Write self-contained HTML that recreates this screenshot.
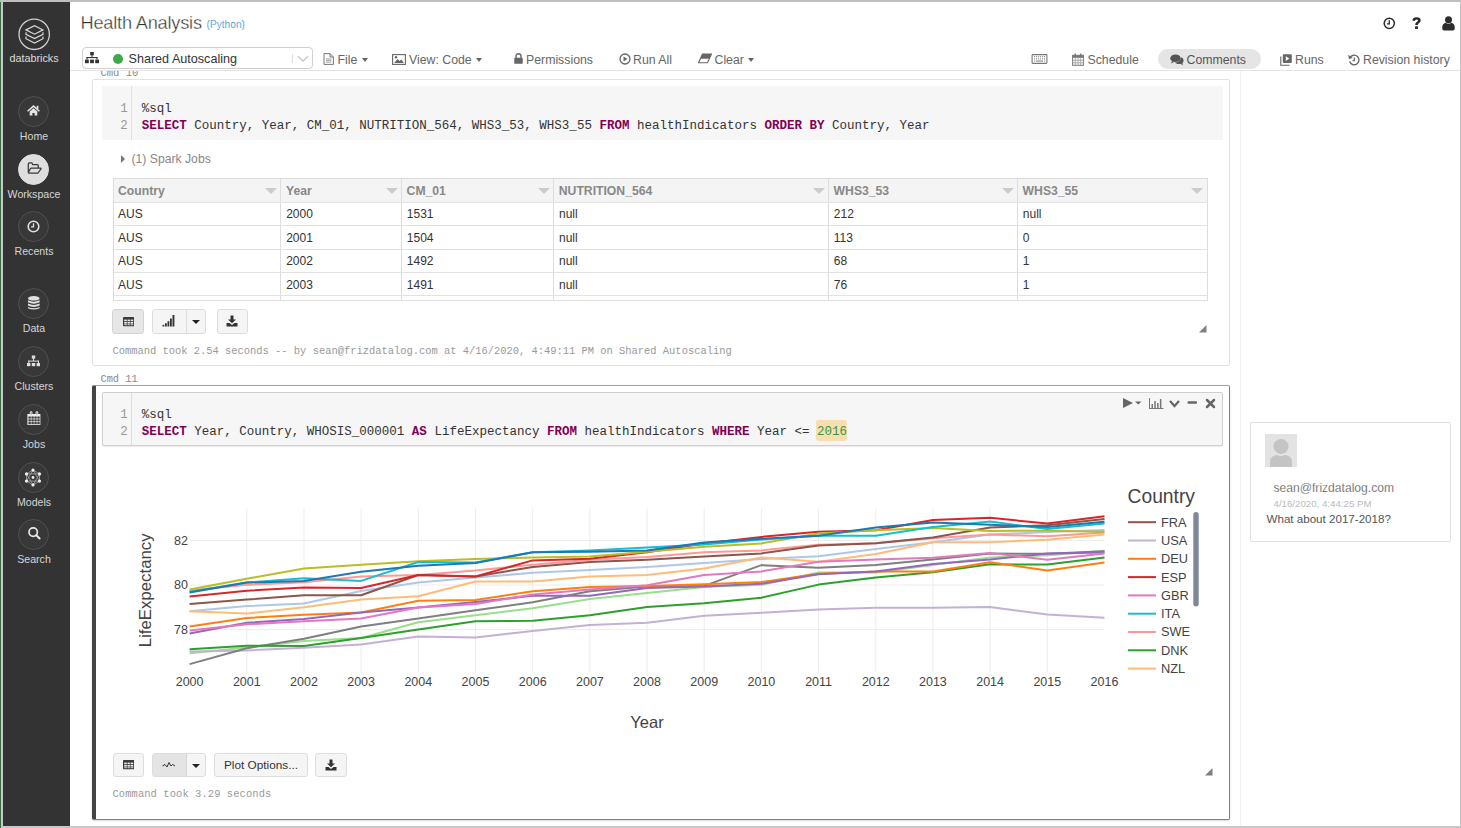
<!DOCTYPE html>
<html><head><meta charset="utf-8">
<style>
*{box-sizing:border-box;margin:0;padding:0}
html,body{width:1461px;height:828px;overflow:hidden;background:#fff}
body{position:relative;font-family:"Liberation Sans",sans-serif;color:#333}
.a{position:absolute}
.mono{font-family:"Liberation Mono",monospace}
.t{position:absolute;white-space:nowrap;line-height:1}
/* sidebar */
#side{left:3px;top:2px;width:67px;height:824px;background:#333}
.nav{position:absolute;left:15.4px;width:31px;height:31px;border-radius:50%;border:1px solid #505050;background:#383838}
.nav svg{position:absolute;left:-1px;top:-1px}
.navl{position:absolute;left:0;width:62px;text-align:center;font-size:10.6px;color:#d6d6d6;line-height:1;white-space:nowrap}
/* toolbar */
.tb{position:absolute;top:53.5px;font-size:12.3px;color:#666;line-height:1;white-space:nowrap}
.tb svg{position:absolute}
.caret{display:inline-block;width:0;height:0;border-left:3.5px solid transparent;border-right:3.5px solid transparent;border-top:4px solid #666}
/* code */
.code{position:absolute;font-family:"Liberation Mono",monospace;font-size:12.5px;line-height:17px;color:#333;white-space:pre}
.kw{color:#7f0055;font-weight:bold}
.ln{position:absolute;font-family:"Liberation Mono",monospace;font-size:12.5px;line-height:17px;color:#999;text-align:right;width:14px}
.editor{position:absolute;background:#f6f6f6}
/* table */
.tbl{position:absolute;left:112.5px;top:178px;width:1095px;height:123px;border:1px solid #ddd;overflow:hidden}
.hdr{position:absolute;left:0;top:0;height:24px;width:100%;background:#f4f4f4;border-bottom:1px solid #ddd}
.col{position:absolute;top:0;height:123px;border-left:1px solid #ddd}
.ht{position:absolute;top:6px;font-size:12.2px;font-weight:bold;color:#888;line-height:1;white-space:nowrap}
.sc{position:absolute;top:9px;width:0;height:0;border-left:6px solid transparent;border-right:6px solid transparent;border-top:6.5px solid #ccc}
.row{position:absolute;left:0;width:100%;border-bottom:1px solid #e2e2e2}
.ct{position:absolute;font-size:12px;color:#333;line-height:1;white-space:nowrap}
.btn{position:absolute;border:1px solid #ddd;border-radius:3px;background:#f5f5f5}
.btn.on{background:#e6e6e6;border-color:#d4d4d4}
.cmdt{position:absolute;font-family:"Liberation Mono",monospace;font-size:10.43px;color:#999;line-height:1;white-space:nowrap}
.chart text{font-family:"Liberation Sans",sans-serif;fill:#444}
</style></head><body>
<!-- frame -->
<div class="a" style="left:0;top:0;width:1px;height:828px;background:#3d6b45"></div>
<div class="a" style="left:1px;top:0;width:2px;height:828px;background:#c8c8cc"></div>
<div class="a" style="left:0;top:0;width:1461px;height:2px;background:#bfbfbf"></div>
<div class="a" style="left:1459.5px;top:0;width:1.5px;height:828px;background:#c2c2c2"></div>
<div class="a" style="left:1px;top:826px;width:1460px;height:2px;background:#c8c8c8"></div>

<!-- sidebar -->
<div id="side" class="a">
  <svg class="a" style="left:0;top:0" width="67" height="70" viewBox="0 -0.7 67 70">
    <circle cx="31.2" cy="31.6" r="15.2" fill="none" stroke="#cfcfcf" stroke-width="1.3"/>
    <g fill="none" stroke="#d8d8d8" stroke-width="1.2" stroke-linejoin="miter">
      <path d="M23 27.2 L31.5 22.9 L40 27.2 L31.5 31.5 Z"/>
      <path d="M23 29.5 V31.6 L31.5 35.9 L40 31.6 V29.5"/>
      <path d="M23 33.9 V36 L31.5 40.3 L40 36 V33.9"/>
    </g>
  </svg>
  <div class="navl" style="top:51px;font-size:10.8px;color:#dcdcdc">databricks</div>

  <div class="nav" style="top:93.8px"><svg width="31" height="31" viewBox="0 0 31 31"><path d="M9.6 15.3 L15.5 10.1 L21.4 15.3" fill="none" stroke="#e6e6e6" stroke-width="1.5"/><rect x="18.7" y="9.8" width="1.7" height="3" fill="#e6e6e6"/><path d="M11.7 15.6 L15.5 12.3 L19.3 15.6 V19.6 H16.6 V17.1 H14.4 V19.6 H11.7 Z" fill="#e6e6e6"/></svg></div>
  <div class="navl" style="top:128.5px">Home</div>

  <div class="nav" style="top:151.5px;background:#dedede;border-color:#dedede"><svg width="31" height="31" viewBox="0 0 31 31"><path d="M10.3 18.6 V9.9 Q10.3 8.9 11.3 8.9 H13.3 Q14.1 8.9 14.4 9.7 L14.7 10.6 H19.2 Q20.3 10.6 20.3 11.7 V13.8 M10.3 18.6 Q10.4 19 11 19 H19.6 Q20.2 19 20.4 18.5 L23 14.8 Q23.2 14 22.4 14 H13.3 Q12.8 14 12.5 14.5 L10.3 18.6" fill="none" stroke="#3a3a3a" stroke-width="1.25" stroke-linejoin="round"/></svg></div>
  <div class="navl" style="top:186.5px">Workspace</div>

  <div class="nav" style="top:208.8px"><svg width="31" height="31" viewBox="0 0 31 31"><circle cx="15.5" cy="15.5" r="5.3" fill="none" stroke="#e0e0e0" stroke-width="1.6"/><path d="M15.5 12.2 V15.8 H13" fill="none" stroke="#e0e0e0" stroke-width="1.3"/></svg></div>
  <div class="navl" style="top:244px">Recents</div>

  <div class="nav" style="top:286.2px"><svg width="31" height="31" viewBox="0 0 31 31"><g fill="#e0e0e0" transform="translate(15.8 0) scale(1.08 1) translate(-15.5 0)"><ellipse cx="15.5" cy="10.3" rx="5.4" ry="2.3"/><path d="M10.1 12.3 Q15.5 15.2 20.9 12.3 V14.3 Q15.5 17.2 10.1 14.3 Z"/><path d="M10.1 15.6 Q15.5 18.5 20.9 15.6 V17.6 Q15.5 20.5 10.1 17.6 Z"/><path d="M10.1 18.9 Q15.5 21.8 20.9 18.9 V20.2 Q15.5 22.8 10.1 20.2 Z"/></g></svg></div>
  <div class="navl" style="top:321px">Data</div>

  <div class="nav" style="top:344.1px"><svg width="31" height="31" viewBox="0 0 31 31"><g fill="#e0e0e0"><rect x="13.8" y="9.5" width="3.4" height="3.2"/><rect x="15" y="12.5" width="1" height="2.5"/><rect x="10.3" y="14.6" width="10.4" height="1"/><rect x="10.3" y="14.6" width="1" height="2.5"/><rect x="20" y="14.6" width="1" height="2.5"/><rect x="9" y="17" width="3.4" height="3.2"/><rect x="13.8" y="17" width="3.4" height="3.2"/><rect x="18.6" y="17" width="3.4" height="3.2"/></g></svg></div>
  <div class="navl" style="top:379px">Clusters</div>

  <div class="nav" style="top:401.9px"><svg width="31" height="31" viewBox="0 0 31 31"><rect x="9.4" y="10" width="13" height="11.1" rx="0.4" fill="#ececec"/><g fill="#363636"><rect x="10.5" y="12.5" width="2.3" height="2.1"/><rect x="10.5" y="15.3" width="2.3" height="2.1"/><rect x="10.5" y="18.1" width="2.3" height="2.1"/><rect x="13.45" y="12.5" width="2.3" height="2.1"/><rect x="13.45" y="15.3" width="2.3" height="2.1"/><rect x="13.45" y="18.1" width="2.3" height="2.1"/><rect x="16.4" y="12.5" width="2.3" height="2.1"/><rect x="16.4" y="15.3" width="2.3" height="2.1"/><rect x="16.4" y="18.1" width="2.3" height="2.1"/><rect x="19.35" y="12.5" width="2.3" height="2.1"/><rect x="19.35" y="15.3" width="2.3" height="2.1"/><rect x="19.35" y="18.1" width="2.3" height="2.1"/></g><rect x="11.8" y="7.2" width="2.6" height="3.8" rx="1.2" fill="#ececec"/><rect x="12.7" y="8.2" width="0.8" height="2.2" fill="#555"/><rect x="17.6" y="7.2" width="2.6" height="3.8" rx="1.2" fill="#ececec"/><rect x="18.5" y="8.2" width="0.8" height="2.2" fill="#555"/></svg></div>
  <div class="navl" style="top:436.5px">Jobs</div>

  <div class="nav" style="top:459.7px"><svg width="31" height="31" viewBox="0 0 31 31" style="left:-1px;top:-1px"><g stroke="#cfcfcf" stroke-width="0.7" fill="none" opacity="0.85"><path d="M15 8.1 L21.5 11.9 V19.1 L15 22.9 L8.5 19.1 V11.9 Z"/><path d="M15 8.1 L21.5 19.1 H8.5 Z M15 22.9 L8.5 11.9 H21.5 Z"/></g><g fill="#f0f0f0"><circle cx="15" cy="8.1" r="1.6"/><circle cx="21.5" cy="11.9" r="1.6"/><circle cx="21.5" cy="19.1" r="1.6"/><circle cx="15" cy="22.9" r="1.6"/><circle cx="8.5" cy="19.1" r="1.6"/><circle cx="8.5" cy="11.9" r="1.6"/><circle cx="15" cy="15.5" r="1.4"/></g></svg></div>
  <div class="navl" style="top:494.5px">Models</div>

  <div class="nav" style="top:517.3px"><svg width="31" height="31" viewBox="0 0 31 31"><circle cx="15.2" cy="13.1" r="4.2" fill="none" stroke="#e8e8e8" stroke-width="1.7"/><path d="M18.3 16.2 L21.6 19.5" stroke="#e8e8e8" stroke-width="2" stroke-linecap="round"/></svg></div>
  <div class="navl" style="top:552px">Search</div>
</div>

<!-- header -->
<div class="t" style="left:80.5px;top:14px;font-size:18.2px;color:#333;letter-spacing:-0.2px;-webkit-text-stroke:0.35px #fff">Health Analysis</div>
<div class="t" style="left:206.5px;top:19.5px;font-size:10.2px;color:#2b8ad0;-webkit-text-stroke:0.2px #fff">(Python)</div>

<svg class="a" style="left:1383px;top:17px" width="13" height="13" viewBox="0 0 13 13"><circle cx="6.3" cy="6.3" r="5.1" fill="none" stroke="#2a2a2a" stroke-width="1.5"/><path d="M6.3 3.2 V6.8 H4" fill="none" stroke="#2a2a2a" stroke-width="1.3"/></svg>
<svg class="a" style="left:1412px;top:16.8px" width="9" height="12.5" viewBox="0 0 9 12.5"><path d="M0.3 3.6 Q0.6 0.2 4.6 0.2 Q8.7 0.2 8.7 3.4 Q8.7 5.2 6.9 6.2 Q5.8 6.8 5.8 7.9 H3.2 Q3.1 5.9 4.6 5 Q6 4.2 6 3.5 Q6 2.4 4.5 2.4 Q3.1 2.4 2.8 4.1 Z" fill="#2a2a2a"/><rect x="3.1" y="9.3" width="2.8" height="2.9" rx="0.3" fill="#2a2a2a"/></svg>
<svg class="a" style="left:1441px;top:15.6px" width="15" height="15" viewBox="0 0 15 15"><circle cx="7.5" cy="3.8" r="3.5" fill="#2d2d2d"/><path d="M1.2 12 Q1.2 7.7 4.5 6.8 Q7.5 8.6 10.5 6.8 Q13.8 7.7 13.8 12 Q13.8 14.6 12 14.6 H3 Q1.2 14.6 1.2 12 Z" fill="#2d2d2d"/></svg>

<!-- toolbar -->
<div class="a" style="left:70px;top:70px;width:1390px;height:1px;background:#e4e4e4"></div>
<div class="a" style="left:81.5px;top:46.5px;width:231.5px;height:22px;border:1px solid #d0d0d0;border-radius:4px;background:#fff"></div>
<svg class="a" style="left:85px;top:52px" width="14" height="12" viewBox="0 0 14 12"><g fill="#333"><rect x="5.2" y="0" width="3.6" height="3.3"/><rect x="6.5" y="3" width="1" height="2.5"/><rect x="1.5" y="5" width="11" height="1.1"/><rect x="1.5" y="5" width="1.1" height="2.5"/><rect x="11.4" y="5" width="1.1" height="2.5"/><rect x="0" y="7.6" width="3.8" height="3.6"/><rect x="5.1" y="7.6" width="3.8" height="3.6"/><rect x="10.2" y="7.6" width="3.8" height="3.6"/></g></svg>
<div class="a" style="left:113px;top:54.3px;width:10px;height:10px;border-radius:50%;background:#3eaa4a"></div>
<div class="t" style="left:128.5px;top:53px;font-size:12.6px;color:#333">Shared Autoscaling</div>
<div class="a" style="left:292px;top:54px;width:1px;height:9px;background:#ddd"></div>
<svg class="a" style="left:297px;top:55px" width="12" height="8" viewBox="0 0 12 8"><path d="M1 1.2 L6 6 L11 1.2" fill="none" stroke="#c8c8c8" stroke-width="1.4"/></svg>

<svg class="a" style="left:322.5px;top:52.5px" width="12" height="12" viewBox="0 0 12 12"><path d="M1 0.6 H7 L10.4 4 V11.4 H1 Z M7 0.6 V4 H10.4" fill="none" stroke="#777" stroke-width="1"/><path d="M3 6 H8.4 M3 7.6 H8.4 M3 9.2 H8.4" stroke="#999" stroke-width="0.9"/></svg>
<div class="tb" style="left:337.5px">File <span class="caret" style="margin-left:1px;vertical-align:2px"></span></div>

<svg class="a" style="left:392px;top:53.5px" width="14" height="11" viewBox="0 0 14 11"><rect x="0.6" y="0.6" width="12.8" height="9.8" fill="none" stroke="#666" stroke-width="1.1"/><path d="M2.2 9 L5.5 5 L7.5 7 L9.5 5.5 L11.8 9 Z" fill="#666"/><circle cx="4" cy="3.3" r="1.2" fill="#666"/></svg>
<div class="tb" style="left:409px">View: Code <span class="caret" style="margin-left:1px;vertical-align:2px"></span></div>

<svg class="a" style="left:513.5px;top:52.5px" width="9" height="11" viewBox="0 0 9 11"><path d="M2 5 V3.3 Q2 0.8 4.5 0.8 Q7 0.8 7 3.3 V5" fill="none" stroke="#666" stroke-width="1.4"/><rect x="0.3" y="4.8" width="8.4" height="6" rx="0.6" fill="#666"/></svg>
<div class="tb" style="left:526px">Permissions</div>

<svg class="a" style="left:618.5px;top:52.5px" width="12" height="12" viewBox="0 0 12 12"><circle cx="6" cy="6" r="5" fill="none" stroke="#666" stroke-width="1.3"/><path d="M4.5 3.5 L8.5 6 L4.5 8.5 Z" fill="#666"/></svg>
<div class="tb" style="left:633px">Run All</div>

<svg class="a" style="left:698px;top:53px" width="14" height="11" viewBox="0 0 14 11"><path d="M4.5 1 H13.5 L9.5 9.8 H0.5 Z" fill="none" stroke="#666" stroke-width="1.1"/><path d="M4.5 1 H13.5 L11.3 5.8 H2.3 Z" fill="#666"/></svg>
<div class="tb" style="left:714.5px">Clear <span class="caret" style="margin-left:1px;vertical-align:2px"></span></div>

<svg class="a" style="left:1031px;top:54px" width="17" height="10" viewBox="0 0 16 10"><rect x="0.6" y="0.6" width="14.8" height="8.8" rx="0.6" fill="none" stroke="#777" stroke-width="1.1"/><g fill="#888"><rect x="2.5" y="2.1" width="1.1" height="1.1"/><rect x="4.5" y="2.1" width="1.1" height="1.1"/><rect x="6.5" y="2.1" width="1.1" height="1.1"/><rect x="8.5" y="2.1" width="1.1" height="1.1"/><rect x="10.5" y="2.1" width="1.1" height="1.1"/><rect x="12.5" y="2.1" width="1.1" height="1.1"/><rect x="2.5" y="4.3" width="1.1" height="1.1"/><rect x="4.5" y="4.3" width="1.1" height="1.1"/><rect x="6.5" y="4.3" width="1.1" height="1.1"/><rect x="8.5" y="4.3" width="1.1" height="1.1"/><rect x="10.5" y="4.3" width="1.1" height="1.1"/><rect x="12.5" y="4.3" width="1.1" height="1.1"/><rect x="2.5" y="6.5" width="1.1" height="1.1"/><rect x="4.5" y="6.5" width="7" height="1.1"/><rect x="12.5" y="6.5" width="1.1" height="1.1"/></g></svg>

<svg class="a" style="left:1072.3px;top:53px" width="12" height="13" viewBox="0 0 12 13"><rect x="0.6" y="2.3" width="10.8" height="10" fill="none" stroke="#777" stroke-width="1"/><rect x="0.6" y="2.3" width="10.8" height="2.5" fill="#777"/><path d="M0.6 7.3 H11.4 M0.6 9.8 H11.4 M3.3 4.8 V12.3 M6 4.8 V12.3 M8.7 4.8 V12.3" stroke="#999" stroke-width="0.8"/><rect x="2.5" y="0.5" width="1.4" height="3" fill="#777"/><rect x="8.1" y="0.5" width="1.4" height="3" fill="#777"/></svg>
<div class="tb" style="left:1087.5px">Schedule</div>

<div class="a" style="left:1158px;top:49px;width:102.5px;height:19.5px;border-radius:10px;background:#e5e5e5"></div>
<svg class="a" style="left:1170px;top:54.3px" width="14" height="12" viewBox="0 0 14 12"><ellipse cx="5.5" cy="4.3" rx="5.2" ry="3.8" fill="#555"/><path d="M2 7 L1 9.5 L4.5 7.8 Z" fill="#555"/><path d="M11.4 3.2 Q13.6 4.2 13.6 6.4 Q13.6 8 12.4 9 L13 11.2 L10.3 9.8 Q9 10.2 7.5 9.9 Q5.7 9.5 4.8 8.6 Q9.8 8.6 11.4 3.2 Z" fill="#555"/></svg>
<div class="tb" style="left:1186.5px;color:#555">Comments</div>

<svg class="a" style="left:1280.2px;top:54px" width="12" height="12" viewBox="0 0 12 12"><rect x="2.8" y="0.3" width="9" height="8.6" rx="0.8" fill="#666"/><path d="M5.8 2.3 L9.3 4.6 L5.8 6.9 Z" fill="#fff"/><path d="M0.8 2.5 V11.2 H9.5" fill="none" stroke="#666" stroke-width="1.1"/></svg>
<div class="tb" style="left:1295px">Runs</div>

<svg class="a" style="left:1348.3px;top:53.5px" width="12" height="12" viewBox="0 0 12 12"><path d="M2.2 3.2 A4.8 4.8 0 1 1 1.6 7.6" fill="none" stroke="#666" stroke-width="1.4"/><path d="M0.3 0.8 L0.8 5 L4.8 4 Z" fill="#666"/><path d="M6.3 3.5 V6.6 H4.6" fill="none" stroke="#666" stroke-width="1.2"/></svg>
<div class="tb" style="left:1363px">Revision history</div>

<!-- right panel line -->
<div class="a" style="left:1239.5px;top:71px;width:1px;height:755px;background:#f0f0f0"></div>

<!-- Cmd 10 -->
<div class="a" style="left:70px;top:71px;width:1169px;height:755px;overflow:hidden">
<div class="a" style="left:-70px;top:-71px;width:1461px;height:828px">
<div class="cmdt" style="left:100.5px;top:68px;font-size:10.5px;color:#888">Cmd 10</div>
<div class="a" style="left:91.7px;top:79px;width:1138.3px;height:286.7px;border:1px solid #e2e2e2;border-radius:2px;box-shadow:0 0 1px rgba(0,0,0,0.05)"></div>
<div class="editor" style="left:102px;top:85.5px;width:1120.5px;height:54px"></div>
<div class="a" style="left:131px;top:86px;width:1px;height:53.5px;background:#e0e0e0"></div>
<div class="ln" style="left:113.8px;top:100.5px">1<br>2</div>
<div class="code" style="left:141.8px;top:100.5px">%sql
<span class="kw">SELECT</span> Country, Year, CM_01, NUTRITION_564, WHS3_53, WHS3_55 <span class="kw">FROM</span> healthIndicators <span class="kw">ORDER BY</span> Country, Year</div>

<div class="a" style="left:121px;top:155px;width:0;height:0;border-top:4px solid transparent;border-bottom:4px solid transparent;border-left:4.5px solid #777"></div>
<div class="t" style="left:131.5px;top:153px;font-size:12.2px;color:#888">(1) Spark Jobs</div>

<div class="tbl">
  <div class="hdr"></div>
  <div class="col" style="left:166.7px"></div>
  <div class="col" style="left:287.3px"></div>
  <div class="col" style="left:439.5px"></div>
  <div class="col" style="left:714.3px"></div>
  <div class="col" style="left:903.3px"></div>
  <div class="row" style="top:0;height:24px"></div>
  <div class="row" style="top:24px;height:23px"></div>
  <div class="row" style="top:47px;height:23.5px"></div>
  <div class="row" style="top:70.5px;height:23.5px"></div>
  <div class="row" style="top:94px;height:23px"></div>
  <div class="ht" style="left:4.5px">Country</div><div class="sc" style="left:151.4px"></div>
  <div class="ht" style="left:172.5px">Year</div><div class="sc" style="left:272px"></div>
  <div class="ht" style="left:293.1px">CM_01</div><div class="sc" style="left:424.2px"></div>
  <div class="ht" style="left:445.3px">NUTRITION_564</div><div class="sc" style="left:699px"></div>
  <div class="ht" style="left:720.1px">WHS3_53</div><div class="sc" style="left:888px"></div>
  <div class="ht" style="left:909.1px">WHS3_55</div><div class="sc" style="left:1077.7px"></div>
  <div class="ct" style="left:4.5px;top:29px">AUS<br></div>
  <div class="ct" style="left:4.5px;top:52.5px">AUS</div>
  <div class="ct" style="left:4.5px;top:76px">AUS</div>
  <div class="ct" style="left:4.5px;top:99.5px">AUS</div>
  <div class="ct" style="left:172.7px;top:29px">2000</div>
  <div class="ct" style="left:172.7px;top:52.5px">2001</div>
  <div class="ct" style="left:172.7px;top:76px">2002</div>
  <div class="ct" style="left:172.7px;top:99.5px">2003</div>
  <div class="ct" style="left:293.3px;top:29px">1531</div>
  <div class="ct" style="left:293.3px;top:52.5px">1504</div>
  <div class="ct" style="left:293.3px;top:76px">1492</div>
  <div class="ct" style="left:293.3px;top:99.5px">1491</div>
  <div class="ct" style="left:445.5px;top:29px">null</div>
  <div class="ct" style="left:445.5px;top:52.5px">null</div>
  <div class="ct" style="left:445.5px;top:76px">null</div>
  <div class="ct" style="left:445.5px;top:99.5px">null</div>
  <div class="ct" style="left:720.3px;top:29px">212</div>
  <div class="ct" style="left:720.3px;top:52.5px">113</div>
  <div class="ct" style="left:720.3px;top:76px">68</div>
  <div class="ct" style="left:720.3px;top:99.5px">76</div>
  <div class="ct" style="left:909.3px;top:29px">null</div>
  <div class="ct" style="left:909.3px;top:52.5px">0</div>
  <div class="ct" style="left:909.3px;top:76px">1</div>
  <div class="ct" style="left:909.3px;top:99.5px">1</div>
</div>

<div class="btn on" style="left:112px;top:309px;width:31.7px;height:24.7px"></div>
<svg class="a" style="left:122.8px;top:317px" width="11.5" height="9.5" viewBox="0 0 11.5 9.5"><rect x="0" y="0" width="11.3" height="9.3" rx="0.8" fill="#3a3a3a"/><g fill="#fff" opacity="0.9"><rect x="1.2" y="2.6" width="2.6" height="1.6"/><rect x="4.5" y="2.6" width="2.4" height="1.6"/><rect x="7.6" y="2.6" width="2.6" height="1.6"/><rect x="1.2" y="5" width="2.6" height="1.6"/><rect x="4.5" y="5" width="2.4" height="1.6"/><rect x="7.6" y="5" width="2.6" height="1.6"/><rect x="1.2" y="7.3" width="2.6" height="0.9"/><rect x="4.5" y="7.3" width="2.4" height="0.9"/><rect x="7.6" y="7.3" width="2.6" height="0.9"/></g></svg>
<div class="btn" style="left:152px;top:309px;width:53.5px;height:24.7px"></div>
<div class="a" style="left:185.5px;top:310px;width:1px;height:23px;background:#ddd"></div>
<svg class="a" style="left:162px;top:314px" width="14" height="13" viewBox="0 0 14 13"><g fill="#333"><rect x="0.5" y="10.8" width="1.8" height="1.7"/><rect x="3" y="9.3" width="1.8" height="3.2"/><rect x="5.5" y="7.2" width="1.8" height="5.3"/><rect x="8" y="4.5" width="1.8" height="8"/><rect x="10.5" y="1" width="1.9" height="11.5"/></g></svg>
<div class="a" style="left:192px;top:320px;width:0;height:0;border-left:4px solid transparent;border-right:4px solid transparent;border-top:4.5px solid #222"></div>
<div class="btn" style="left:216.7px;top:309px;width:31.8px;height:24.7px"></div>
<svg class="a" style="left:226px;top:315px" width="12" height="12" viewBox="0 0 12 12"><path d="M4.5 0.5 H7.5 V4.5 H10 L6 8.3 L2 4.5 H4.5 Z" fill="#333"/><path d="M0.5 8 H3.5 L6 10 L8.5 8 H11.5 V11.5 H0.5 Z" fill="#333"/></svg>

<svg class="a" style="left:1197.5px;top:323.5px" width="9" height="9" viewBox="0 0 9 9"><path d="M8.5 1 L1 8.5 H8.5 Z" fill="#6a6a6a" opacity="0.85"/></svg>

<div class="cmdt" style="left:112.5px;top:345.5px">Command took 2.54 seconds -- by sean@frizdatalog.com at 4/16/2020, 4:49:11 PM on Shared Autoscaling</div>

<!-- Cmd 11 -->
<div class="cmdt" style="left:100.5px;top:373.5px;font-size:10.3px;color:#888">Cmd 11</div>
<div class="a" style="left:92px;top:384.5px;width:1138px;height:435.5px;border:1.5px solid #808080;border-top-color:#a2a2a2;border-left:4px solid #444;border-radius:2px;box-shadow:0 1px 2px rgba(0,0,0,0.15)"></div>
<div class="editor" style="left:102px;top:392px;width:1120.5px;height:53.5px;border:1px solid #cfcfcf;border-radius:2px;box-shadow:0 1px 1px rgba(0,0,0,0.08)"></div>
<div class="a" style="left:131px;top:393px;width:1px;height:52px;background:#ddd"></div>
<div class="ln" style="left:113.8px;top:406.5px">1<br>2</div>
<div class="code" style="left:141.8px;top:406.5px">%sql
<span class="kw">SELECT</span> Year, Country, WHOSIS_000001 <span class="kw">AS</span> LifeExpectancy <span class="kw">FROM</span> healthIndicators <span class="kw">WHERE</span> Year &lt;= <span style="background:#f8dfb0;color:#3d9440;border-radius:3px;padding:4.5px 0 2.5px 1.3px;margin-left:-1.3px">2016</span></div>

<!-- cell icons -->
<svg class="a" style="left:1122px;top:397px" width="95" height="13" viewBox="0 0 95 13">
  <path d="M1 1 L11 6 L1 11 Z" fill="#666"/>
  <path d="M13 4.5 H19.5 L16.25 7.5 Z" fill="#666"/>
  <g fill="#777"><rect x="27" y="1" width="1" height="11"/><rect x="27" y="11" width="14.5" height="1"/><rect x="29.5" y="7" width="1.5" height="4"/><rect x="32.3" y="4" width="1.5" height="7"/><rect x="35.1" y="6" width="1.5" height="5"/><rect x="37.9" y="2" width="1.5" height="9"/></g>
  <path d="M48 4 L52.5 9 L57 4" fill="none" stroke="#666" stroke-width="2.2"/>
  <rect x="65.5" y="4.3" width="9.5" height="2.5" rx="1" fill="#666"/>
  <path d="M85 3 L92 10 M92 3 L85 10" stroke="#666" stroke-width="2.5" stroke-linecap="round"/>
</svg>

<!-- chart -->
<svg class="a chart" style="left:0;top:0" width="1240" height="828" viewBox="0 0 1240 828">
  <g stroke="#ececec" stroke-width="1">
    <path d="M246.8 508.5 V672.5 M304 508.5 V672.5 M361.1 508.5 V672.5 M418.3 508.5 V672.5 M475.5 508.5 V672.5 M532.7 508.5 V672.5 M589.9 508.5 V672.5 M647 508.5 V672.5 M704.2 508.5 V672.5 M761.4 508.5 V672.5 M818.6 508.5 V672.5 M875.8 508.5 V672.5 M932.9 508.5 V672.5 M990.1 508.5 V672.5 M1047.3 508.5 V672.5"/>
    <path d="M189.6 540.5 H1104.5 M189.6 585 H1104.5 M189.6 629.6 H1104.5"/>
  </g>
  <g fill="none" stroke-width="2" stroke-linejoin="round">
<polyline points="189.6,653.3 246.8,647.4 304.0,640.9 361.1,638.0 418.3,622.2 475.5,615.2 532.7,608.3 589.9,598.9 647.0,593.0 704.2,587.0 761.4,584.8 818.6,572.6 875.8,572.6 932.9,565.0 990.1,557.4 1047.3,555.2 1104.5,550.7" stroke="#98df8a"/>
<polyline points="189.6,651.5 246.8,650.4 304.0,647.8 361.1,644.6 418.3,636.5 475.5,637.4 532.7,630.9 589.9,625.0 647.0,622.8 704.2,615.7 761.4,612.7 818.6,609.6 875.8,607.8 932.9,607.8 990.1,607.0 1047.3,614.6 1104.5,617.7" stroke="#c5b0d5"/>
<polyline points="189.6,611.3 246.8,606.1 304.0,603.5 361.1,590.9 418.3,582.6 475.5,577.6 532.7,572.8 589.9,570.0 647.0,567.0 704.2,563.0 761.4,559.0 818.6,556.3 875.8,549.1 932.9,542.2 990.1,534.6 1047.3,532.0 1104.5,529.9" stroke="#aec7e8"/>
<polyline points="189.6,611.3 246.8,613.5 304.0,607.2 361.1,599.6 418.3,596.3 475.5,581.5 532.7,581.5 589.9,576.5 647.0,575.0 704.2,568.5 761.4,557.4 818.6,561.7 875.8,554.1 932.9,542.2 990.1,542.2 1047.3,539.8 1104.5,534.4" stroke="#ffbb78"/>
<polyline points="189.6,664.1 246.8,648.3 304.0,638.7 361.1,626.5 418.3,618.5 475.5,610.3 532.7,602.2 589.9,591.3 647.0,586.5 704.2,585.9 761.4,565.1 818.6,567.8 875.8,565.0 932.9,559.6 990.1,553.5 1047.3,553.8 1104.5,551.2" stroke="#7f7f7f"/>
<polyline points="189.6,649.2 246.8,645.7 304.0,646.1 361.1,638.0 418.3,629.6 475.5,621.3 532.7,620.7 589.9,615.2 647.0,607.0 704.2,603.3 761.4,597.7 818.6,584.6 875.8,577.4 932.9,572.2 990.1,564.3 1047.3,564.6 1104.5,557.4" stroke="#2ca02c"/>
<polyline points="189.6,626.6 246.8,618.0 304.0,614.8 361.1,612.6 418.3,600.7 475.5,600.0 532.7,591.3 589.9,587.0 647.0,585.9 704.2,584.3 761.4,582.0 818.6,573.7 875.8,571.5 932.9,571.5 990.1,562.2 1047.3,570.6 1104.5,562.5" stroke="#ff7f0e"/>
<polyline points="189.6,633.6 246.8,622.8 304.0,619.1 361.1,612.6 418.3,607.6 475.5,601.9 532.7,595.7 589.9,595.7 647.0,588.0 704.2,586.5 761.4,583.8 818.6,574.3 875.8,571.5 932.9,563.9 990.1,559.6 1047.3,553.4 1104.5,552.5" stroke="#9467bd"/>
<polyline points="189.6,630.6 246.8,624.3 304.0,621.3 361.1,618.5 418.3,607.6 475.5,603.9 532.7,594.6 589.9,589.6 647.0,585.2 704.2,575.0 761.4,571.4 818.6,561.7 875.8,559.6 932.9,557.8 990.1,553.0 1047.3,559.7 1104.5,553.4" stroke="#e377c2"/>
<polyline points="189.6,590.5 246.8,584.8 304.0,582.2 361.1,576.5 418.3,575.0 475.5,570.6 532.7,564.8 589.9,559.8 647.0,557.0 704.2,552.2 761.4,550.4 818.6,544.8 875.8,543.3 932.9,538.3 990.1,534.6 1047.3,536.2 1104.5,532.6" stroke="#ff9896"/>
<polyline points="189.6,604.0 246.8,599.6 304.0,595.2 361.1,595.2 418.3,575.0 475.5,576.5 532.7,567.0 589.9,562.0 647.0,559.8 704.2,556.5 761.4,553.4 818.6,545.4 875.8,543.3 932.9,537.4 990.1,527.4 1047.3,525.3 1104.5,519.0" stroke="#8c564b"/>
<polyline points="189.6,596.6 246.8,590.7 304.0,587.4 361.1,588.0 418.3,575.0 475.5,576.5 532.7,560.4 589.9,558.7 647.0,552.2 704.2,543.5 761.4,536.9 818.6,531.7 875.8,530.2 932.9,520.0 990.1,517.8 1047.3,523.5 1104.5,516.3" stroke="#d62728"/>
<polyline points="189.6,589.6 246.8,578.7 304.0,568.5 361.1,564.8 418.3,561.3 475.5,558.9 532.7,557.6 589.9,556.5 647.0,551.7 704.2,546.7 761.4,543.4 818.6,533.5 875.8,530.2 932.9,528.0 990.1,530.9 1047.3,530.8 1104.5,531.7" stroke="#bcbd22"/>
<polyline points="189.6,591.7 246.8,582.6 304.0,578.3 361.1,580.9 418.3,562.0 475.5,562.6 532.7,552.2 589.9,550.4 647.0,547.4 704.2,544.6 761.4,539.6 818.6,535.7 875.8,535.7 932.9,527.0 990.1,521.5 1047.3,529.0 1104.5,523.5" stroke="#17becf"/>
<polyline points="189.6,592.4 246.8,582.6 304.0,580.9 361.1,571.7 418.3,565.7 475.5,563.0 532.7,552.2 589.9,551.7 647.0,550.4 704.2,542.4 761.4,538.8 818.6,535.7 875.8,527.4 932.9,522.6 990.1,524.8 1047.3,527.1 1104.5,521.7" stroke="#1f77b4"/>

  </g>
  <g font-size="12.5" text-anchor="end">
    <text x="188" y="544.5">82</text>
    <text x="188" y="589">80</text>
    <text x="188" y="633.5">78</text>
  </g>
  <g font-size="12.5" text-anchor="middle">
    <text x="189.6" y="685.5">2000</text><text x="246.8" y="685.5">2001</text><text x="304" y="685.5">2002</text><text x="361.1" y="685.5">2003</text><text x="418.3" y="685.5">2004</text><text x="475.5" y="685.5">2005</text><text x="532.7" y="685.5">2006</text><text x="589.9" y="685.5">2007</text><text x="647" y="685.5">2008</text><text x="704.2" y="685.5">2009</text><text x="761.4" y="685.5">2010</text><text x="818.6" y="685.5">2011</text><text x="875.8" y="685.5">2012</text><text x="932.9" y="685.5">2013</text><text x="990.1" y="685.5">2014</text><text x="1047.3" y="685.5">2015</text><text x="1104.5" y="685.5">2016</text>
  </g>
  <text x="647" y="728" font-size="16.5" text-anchor="middle">Year</text>
  <text transform="translate(150.8 590.3) rotate(-90)" font-size="16.8" text-anchor="middle">LifeExpectancy</text>
  <text x="1127.5" y="502.5" font-size="19.3">Country</text>
  <g stroke-width="2">
    <path d="M1128 522.2 H1156" stroke="#8c564b"/>
    <path d="M1128 540.5 H1156" stroke="#c5b0d5"/>
    <path d="M1128 558.8 H1156" stroke="#ff7f0e"/>
    <path d="M1128 577.1 H1156" stroke="#d62728"/>
    <path d="M1128 595.4 H1156" stroke="#e377c2"/>
    <path d="M1128 613.7 H1156" stroke="#17becf"/>
    <path d="M1128 632 H1156" stroke="#ff9896"/>
    <path d="M1128 650.3 H1156" stroke="#2ca02c"/>
    <path d="M1128 668.6 H1156" stroke="#ffbb78"/>
  </g>
  <g font-size="12.8">
    <text x="1161" y="526.6">FRA</text>
    <text x="1161" y="544.9">USA</text>
    <text x="1161" y="563.2">DEU</text>
    <text x="1161" y="581.5">ESP</text>
    <text x="1161" y="599.8">GBR</text>
    <text x="1161" y="618.1">ITA</text>
    <text x="1161" y="636.4">SWE</text>
    <text x="1161" y="654.7">DNK</text>
    <text x="1161" y="673">NZL</text>
  </g>
  <rect x="1193.3" y="512" width="5.4" height="94.5" rx="2.7" fill="#7d8898"/>
</svg>

<div class="btn" style="left:112.5px;top:753px;width:31.5px;height:24px"></div>
<svg class="a" style="left:122.8px;top:760.3px" width="11.5" height="9.5" viewBox="0 0 11.5 9.5"><rect x="0" y="0" width="11.3" height="9.3" rx="0.8" fill="#3a3a3a"/><g fill="#fff" opacity="0.9"><rect x="1.2" y="2.6" width="2.6" height="1.6"/><rect x="4.5" y="2.6" width="2.4" height="1.6"/><rect x="7.6" y="2.6" width="2.6" height="1.6"/><rect x="1.2" y="5" width="2.6" height="1.6"/><rect x="4.5" y="5" width="2.4" height="1.6"/><rect x="7.6" y="5" width="2.6" height="1.6"/><rect x="1.2" y="7.3" width="2.6" height="0.9"/><rect x="4.5" y="7.3" width="2.4" height="0.9"/><rect x="7.6" y="7.3" width="2.6" height="0.9"/></g></svg>
<div class="btn" style="left:152px;top:753px;width:53.5px;height:24px;background:linear-gradient(to right,#e4e4e4 0,#e4e4e4 33.5px,#f5f5f5 33.5px)"></div>
<div class="a" style="left:185.5px;top:753.5px;width:1px;height:23px;background:#d6d6d6"></div>
<svg class="a" style="left:162px;top:761px" width="14" height="8" viewBox="0 0 14 8"><path d="M0.5 5 L3 3.5 L5 6 L7 1.5 L9 5 L10.5 3.5 L13 5" fill="none" stroke="#333" stroke-width="1"/></svg>
<div class="a" style="left:192px;top:763.5px;width:0;height:0;border-left:4px solid transparent;border-right:4px solid transparent;border-top:4.5px solid #222"></div>
<div class="btn" style="left:214px;top:753px;width:93.5px;height:24px"></div>
<div class="t" style="left:224px;top:759.5px;font-size:11.8px;color:#333">Plot Options...</div>
<div class="btn" style="left:315px;top:753px;width:31.5px;height:24px"></div>
<svg class="a" style="left:324.5px;top:758.5px" width="12" height="12" viewBox="0 0 12 12"><path d="M4.5 0.5 H7.5 V4.5 H10 L6 8.3 L2 4.5 H4.5 Z" fill="#333"/><path d="M0.5 8 H3.5 L6 10 L8.5 8 H11.5 V11.5 H0.5 Z" fill="#333"/></svg>

<svg class="a" style="left:1203.7px;top:767px" width="9" height="9" viewBox="0 0 9 9"><path d="M8.5 1 L1 8.5 H8.5 Z" fill="#6a6a6a" opacity="0.85"/></svg>

<div class="cmdt" style="left:112.5px;top:789.3px;letter-spacing:0.1px">Command took 3.29 seconds</div>
</div>
</div>

<!-- comment card -->
<div class="a" style="left:1249.5px;top:421.5px;width:201px;height:120px;border:1px solid #e2e2e2;border-radius:2px"></div>
<svg class="a" style="left:1265px;top:433.5px" width="32" height="33" viewBox="0 0 32 33"><rect width="32" height="33" fill="#e3e3e3"/><circle cx="16" cy="12.5" r="7.5" fill="#c4c4c4"/><path d="M5 33 V28 Q5 21.5 12 21 Q16 23 20 21 Q27 21.5 27 28 V33 Z" fill="#c4c4c4"/></svg>
<div class="t" style="left:1273.5px;top:481.5px;font-size:12.1px;color:#444;-webkit-text-stroke:0.25px #fff">sean@frizdatalog.com</div>
<div class="t" style="left:1273.5px;top:499px;font-size:9.7px;color:#bbb">4/16/2020, 4:44:25 PM</div>
<div class="t" style="left:1266.5px;top:512.5px;font-size:11.6px;color:#555">What about 2017-2018?</div>

</body></html>
